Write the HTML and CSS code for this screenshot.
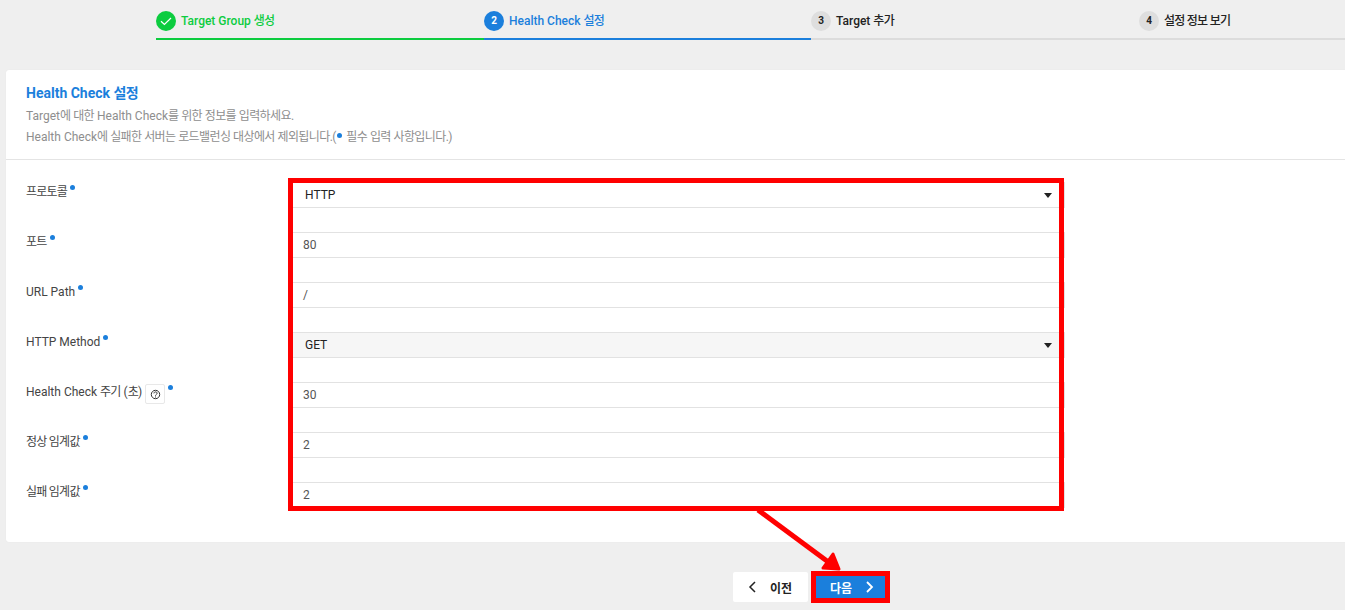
FILE: index.html
```html
<!DOCTYPE html>
<html lang="ko">
<head>
<meta charset="utf-8">
<title>Health Check 설정</title>
<link rel="stylesheet" href="styles.css">
</head>
<body>
<div class="page">
  <ol class="stepper">
    <li class="step done">
      <span class="badge"><svg width="20" height="20" viewBox="0 0 20 20"><path d="M5 10.2l3.4 3.3L15 7" fill="none" stroke="#fff" stroke-width="1.2"/></svg></span>
      <span>Target Group <span class="ko">생성</span></span>
    </li>
    <li class="step active"><span class="badge">2</span><span>Health Check <span class="ko">설정</span></span></li>
    <li class="step"><span class="badge">3</span><span>Target <span class="ko">추가</span></span></li>
    <li class="step"><span class="badge">4</span><span class="ko">설정 정보 보기</span></li>
  </ol>

  <section class="card">
    <header class="card-head">
      <h2>Health Check <span class="ko">설정</span></h2>
      <p>Target<span class="ko-wide">에 대한</span> Health Check<span class="ko-wide">를 위한 정보를 입력하세요.</span></p>
      <p>Health Check<span class="ko-wide">에 실패한 서버는 로드밸런싱 대상에서 제외됩니다.</span>(<i class="dot inline"></i><span class="ko-wide">필수 입력 사항입니다.</span>)</p>
    </header>
    <form class="form">
      <div class="row">
        <label><span class="ko">프로토콜</span><i class="dot"></i></label>
        <div class="field select"><span>HTTP</span></div>
      </div>
      <div class="row">
        <label><span class="ko">포트</span><i class="dot"></i></label>
        <div class="field"><span>80</span></div>
      </div>
      <div class="row">
        <label>URL Path<i class="dot"></i></label>
        <div class="field"><span>/</span></div>
      </div>
      <div class="row">
        <label>HTTP Method<i class="dot"></i></label>
        <div class="field select shaded"><span>GET</span></div>
      </div>
      <div class="row">
        <label>Health Check <span class="ko">주기</span> (<span class="ko">초</span>)<span class="help"><svg width="11" height="11" viewBox="0 0 11 11"><circle cx="5.5" cy="5.5" r="4.2" fill="none" stroke="#333" stroke-width="1"/><path d="M3.9 4.4c.1-2 3.3-2 3.2 0 0 1.100-1.600 1-1.600 2.300" fill="none" stroke="#333" stroke-width="1"/><path d="M5 7.600h1v1H5z" fill="#333"/></svg></span><i class="dot"></i></label>
        <div class="field"><span>30</span></div>
      </div>
      <div class="row">
        <label><span class="ko">정상 임계값</span><i class="dot"></i></label>
        <div class="field"><span>2</span></div>
      </div>
      <div class="row">
        <label><span class="ko">실패 임계값</span><i class="dot"></i></label>
        <div class="field"><span>2</span></div>
      </div>
    </form>
  </section>

  <footer class="actions">
    <button type="button" class="btn prev"><svg width="9" height="12" viewBox="0 0 9 12"><path d="M7 1L2 6l5 5" fill="none" stroke="#222" stroke-width="1.500"/></svg><span>이전</span></button>
    <button type="button" class="btn next"><span>다음</span><svg width="9" height="12" viewBox="0 0 9 12"><path d="M2 1l5 5-5 5" fill="none" stroke="#fff" stroke-width="1.800"/></svg></button>
  </footer>

  <div class="mark mark-fields"></div>
  <div class="mark mark-next"></div>
  <svg class="mark-arrow" width="100" height="70" viewBox="0 0 100 70"><path d="M8 2L81 56" fill="none" stroke="#f00" stroke-width="5"/><path d="M83 46L89 61 73 60Z" fill="#f00" stroke="#f00" stroke-width="3" stroke-linejoin="round"/></svg>
</div>
</body>
</html>
```

FILE: styles.css
```css
* { box-sizing: border-box; }
html, body { margin: 0; padding: 0; }
body {
  background: #efefef;
  font-family: Roboto, "Noto Sans CJK KR", sans-serif;
  font-size: 12px;
  color: #333;
  overflow: hidden;
}
.page { position: relative; width: 1345px; height: 610px; overflow: hidden; }
.ko { letter-spacing: -0.75px; }
.ko-wide { letter-spacing: -0.6px; word-spacing: 0.3px; }

.stepper {
  list-style: none;
  margin: 0;
  padding: 0 0 0 156px;
  display: flex;
  height: 40px;
}
.step {
  flex: 0 0 328px;
  display: flex;
  align-items: flex-start;
  gap: 5px;
  padding-top: 11px;
  border-bottom: 2px solid #dcdcdc;
  font-weight: 500;
  color: #222;
  line-height: 20px;
}
.step:nth-child(2) { flex-basis: 327px; }
.step:nth-child(4) { flex-basis: 206px; }
.badge {
  width: 20px;
  height: 20px;
  border-radius: 50%;
  background: #dedede;
  display: flex;
  align-items: center;
  justify-content: center;
  font-size: 10px;
  font-weight: 700;
}
.step.done { color: #0ccc3f; border-color: #0ccc3f; }
.step.done .badge { background: #0ccc3f; }
.step.active { color: #1b7fdc; border-color: #1b7fdc; }
.step.active .badge { background: #1b7fdc; color: #fff; }

.card {
  margin: 30px 0 0 6px;
  width: 1345px;
  height: 472px;
  background: #fff;
  border-radius: 3px;
  box-shadow: 0 0 1px #e0e0e0;
}
.card-head {
  height: 90px;
  padding: 14px 20px 0;
  border-bottom: 1px solid #e4e4e4;
}
.card-head h2 {
  margin: 0 0 4px;
  font-size: 14px;
  line-height: 18px;
  font-weight: 700;
  color: #1b7fdc;
}
.card-head p {
  margin: 0;
  line-height: 21px;
  color: #8e8e8e;
}
.dot {
  display: inline-block;
  width: 5px;
  height: 5px;
  border-radius: 50%;
  background: #1b7fdc;
  margin-left: 3px;
  vertical-align: 6px;
}
.dot.inline { margin: 0 4px 0 1px; vertical-align: 3px; }

.form { padding-top: 22px; }
.row {
  display: flex;
  height: 50px;
  padding-left: 20px;
}
.row label {
  flex: 0 0 264px;
  line-height: 17px;
  padding-top: 2px;
  color: #444;
  white-space: nowrap;
}
.help {
  display: inline-flex;
  align-items: center;
  justify-content: center;
  width: 20px;
  height: 20px;
  margin-left: 3px;
  border: 1px solid #e8e8e8;
  border-radius: 2px;
  vertical-align: top;
}
.field {
  position: relative;
  width: 775px;
  height: 26px;
  padding-left: 12px;
  border: 1px solid #e2e2e2;
  line-height: 24px;
  color: #555;
  background: #fff;
}
.field.select { padding-left: 14px; color: #222; }
.field.shaded { background: #f6f6f6; }
.field.select::after {
  content: "";
  position: absolute;
  top: 10px;
  right: 12px;
  border-left: 4px solid transparent;
  border-right: 4px solid transparent;
  border-top: 5px solid #222;
}

.actions {
  display: flex;
  gap: 3px;
  margin: 30px 0 0 733px;
}
.btn {
  height: 30px;
  border: 0;
  border-radius: 2px;
  font: 700 12px Roboto, "Noto Sans CJK KR", sans-serif;
  display: flex;
  align-items: center;
}
.prev { width: 75px; background: #fff; color: #222; padding: 0 0 0 15px; gap: 13px; }
.next { width: 77px; background: #1b7fdc; color: #fff; padding: 0 0 0 19px; gap: 13px; }

.mark { position: absolute; border: 5px solid #f00; }
.mark-fields { left: 288px; top: 178px; width: 776px; height: 333px; }
.mark-next { left: 811px; top: 571px; width: 79px; height: 32px; }
.mark-arrow { position: absolute; left: 750px; top: 508px; }
```
